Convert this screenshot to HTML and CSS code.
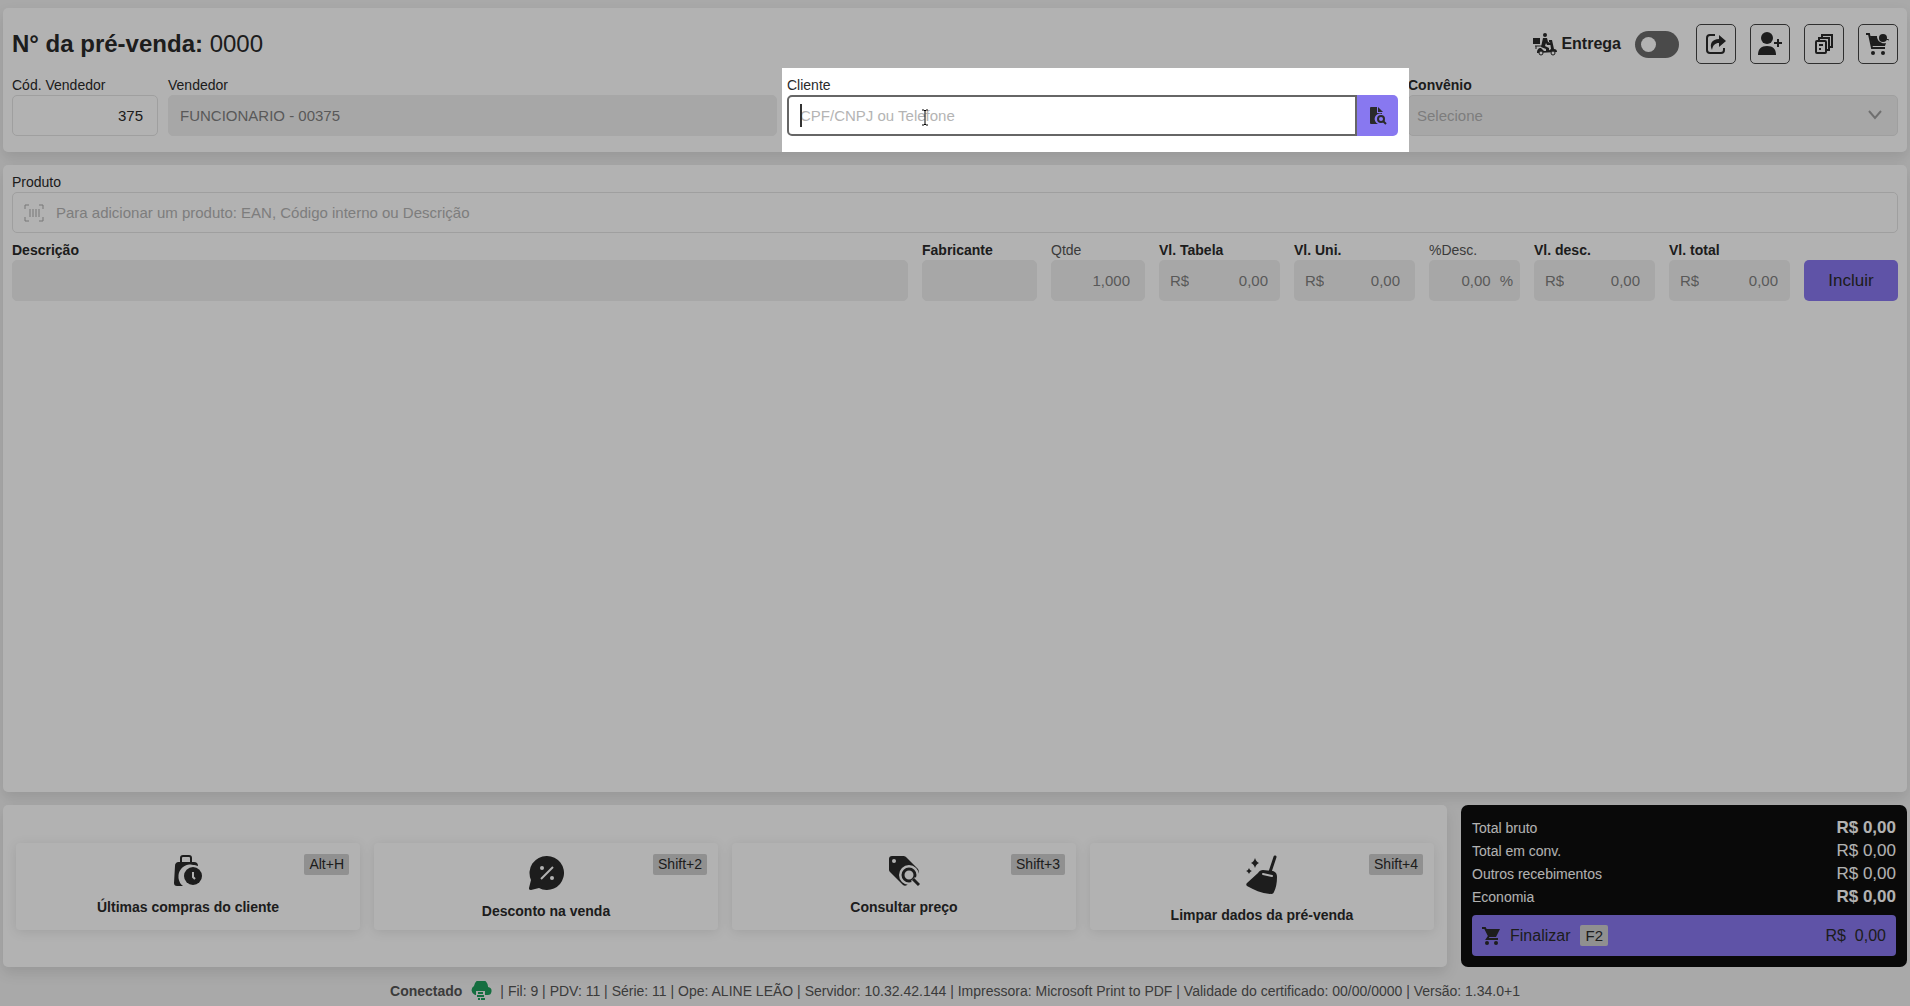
FILE: index.html
```
<!DOCTYPE html>
<html lang="pt-BR">
<head>
    <meta charset="UTF-8">
    <meta name="viewport" content="width=device-width, initial-scale=1.0">
    <title>Pré-venda</title>
    <link rel="stylesheet" href="styles.css">
</head>
<body>
    <main class="page">
        <section class="card header">
            <div class="header-top">
                <h1>N° da pré-venda: <span>0000</span></h1>
                <div class="actions">
                    <label class="delivery" for="entrega">
                        <svg width="24" height="24" viewBox="0 0 24 24">
                            <path d="M0 6h7v6H0z"/>
                            <circle cx="12" cy="3" r="2"/>
                            <path d="M10 6h4l1 4 3 1v2h-4l-1-2-1 3 4 2v3h-3v-2l-5-2z"/>
                            <path d="M2 14h7M3 14v3" stroke="currentColor" stroke-width="1"/>
                            <path d="M4 21c0-3 1-5 4-5l3 3h4l3-2-1-7h-1V8h3l2 9c2 0 3 1 3 3z"/>
                            <circle cx="8" cy="21" r="2" fill="#fff" stroke="currentColor" stroke-width="1"/>
                            <circle cx="20" cy="21" r="2" fill="#fff" stroke="currentColor" stroke-width="1"/>
                        </svg>
                        Entrega
                    </label>
                    <input type="checkbox" class="switch" id="entrega" role="switch">
                    <button type="button" class="icon-btn" aria-label="Exportar">
                        <svg width="22" height="22" viewBox="0 0 22 22">
                            <path d="M10 2H5a3 3 0 0 0-3 3v12a3 3 0 0 0 3 3h11a3 3 0 0 0 3-3v-2" fill="none" stroke="currentColor" stroke-width="2"/>
                            <path d="M14 2l7 6-7 6v-4c-4 0-6 2-7 7-3-6 0-11 7-11z"/>
                        </svg>
                    </button>
                    <button type="button" class="icon-btn" aria-label="Novo cliente">
                        <svg width="24" height="24" viewBox="0 0 24 24">
                            <circle cx="9" cy="6" r="6"/>
                            <path d="M0 23c0-6 3-9 9-9s9 3 9 9z"/>
                            <path d="M20 7v8M16 11h8" stroke="currentColor" stroke-width="2"/>
                        </svg>
                    </button>
                    <button type="button" class="icon-btn" aria-label="Copiar">
                        <svg class="outline" width="20" height="20" viewBox="0 0 20 20">
                            <rect x="2" y="7" width="10" height="12" rx="1"/>
                            <path d="M5 6V4h10v12h-2M8 3V1h10v12h-2M5 11h4M5 15h2"/>
                        </svg>
                    </button>
                    <button type="button" class="icon-btn" aria-label="Carrinho">
                        <svg width="24" height="24" viewBox="0 0 24 24">
                            <path d="M0 2h3l3 14h13" fill="none" stroke="currentColor" stroke-width="2"/>
                            <path d="M4 4h7a7 7 0 0 0 9 7l-1 3H6z"/>
                            <circle cx="17" cy="6" r="4"/>
                            <path d="M20 7l3 1" stroke="currentColor" stroke-width="1"/>
                            <circle cx="7" cy="21" r="2"/>
                            <circle cx="17" cy="21" r="2"/>
                        </svg>
                    </button>
                </div>
            </div>
            <div class="header-fields">
                <div class="field">
                    <label for="codVendedor">Cód. Vendedor</label>
                    <input type="text" class="number" id="codVendedor" value="375">
                </div>
                <div class="field">
                    <label for="vendedor">Vendedor</label>
                    <input type="text" id="vendedor" value="FUNCIONARIO - 00375" disabled>
                </div>
                <div class="field cliente">
                    <label for="cliente">Cliente</label>
                    <div class="input-group">
                        <input type="text" id="cliente" placeholder="CPF/CNPJ ou Telefone">
                        <button type="button" aria-label="Buscar cliente">
                            <svg width="18" height="18" viewBox="0 0 18 18">
                                <path d="M2 0h6v6h5v1a5 5 0 0 0-4 10H2a1 1 0 0 1-1-1V1a1 1 0 0 1 1-1z"/>
                                <path d="M9 0l5 5H9z"/>
                                <circle cx="12" cy="12" r="3" fill="none" stroke="currentColor" stroke-width="2"/>
                                <path d="M14 14l3 3" stroke="currentColor" stroke-width="2"/>
                            </svg>
                        </button>
                    </div>
                    <span class="caret"></span>
                    <svg class="cursor outline" width="8" height="17" viewBox="0 0 8 17">
                        <path d="M1 1h2l1 1 1-1h2M4 2v13M1 16h2l1-1 1 1h2"/>
                    </svg>
                </div>
                <div class="field">
                    <label class="strong" for="convenio">Convênio</label>
                    <div class="select">
                        <select id="convenio" disabled>
                            <option>Selecione</option>
                        </select>
                        <svg class="outline" width="16" height="12" viewBox="0 0 16 12">
                            <path d="M2 2l6 7 6-7"/>
                        </svg>
                    </div>
                </div>
            </div>
        </section>

        <section class="card products">
            <div class="field">
                <label for="produto">Produto</label>
                <div class="search">
                    <svg class="outline thin" width="20" height="18" viewBox="0 0 20 18">
                        <path d="M1 5V1h4M15 1h4v4M19 13v4h-4M5 17H1v-4M6 5v8M9 5v8M12 5v8M15 5v8"/>
                    </svg>
                    <input type="text" id="produto" placeholder="Para adicionar um produto: EAN, Código interno ou Descrição">
                </div>
            </div>
            <div class="item-row">
                <div class="field">
                    <label class="strong" for="descricao">Descrição</label>
                    <input type="text" id="descricao" disabled>
                </div>
                <div class="field">
                    <label class="strong" for="fabricante">Fabricante</label>
                    <input type="text" id="fabricante" disabled>
                </div>
                <div class="field">
                    <label class="soft" for="qtde">Qtde</label>
                    <input type="text" class="number" id="qtde" value="1,000" disabled>
                </div>
                <div class="field">
                    <label class="strong" for="vlTabela">Vl. Tabela</label>
                    <div class="money"><span>R$</span><input type="text" id="vlTabela" value="0,00" disabled></div>
                </div>
                <div class="field">
                    <label class="strong" for="vlUni">Vl. Uni.</label>
                    <div class="money wide"><span>R$</span><input type="text" id="vlUni" value="0,00" disabled></div>
                </div>
                <div class="field">
                    <label class="soft" for="percDesc">%Desc.</label>
                    <div class="money percent"><input type="text" id="percDesc" value="0,00" disabled><span>%</span></div>
                </div>
                <div class="field">
                    <label class="strong" for="vlDesc">Vl. desc.</label>
                    <div class="money wide"><span>R$</span><input type="text" id="vlDesc" value="0,00" disabled></div>
                </div>
                <div class="field">
                    <label class="strong" for="vlTotal">Vl. total</label>
                    <div class="money"><span>R$</span><input type="text" id="vlTotal" value="0,00" disabled></div>
                </div>
                <button type="button" class="include">Incluir</button>
            </div>
        </section>

        <div class="bottom">
            <section class="card shortcuts">
                <button type="button" class="shortcut">
                    <svg width="30" height="32" viewBox="0 0 30 32">
                        <path d="M8 7V3a2 2 0 0 1 2-2h6a2 2 0 0 1 2 2v4" fill="none" stroke="currentColor" stroke-width="2"/>
                        <path d="M5 7h16a4 4 0 0 1 4 4v1A12 12 0 0 0 10 31H4a3 3 0 0 1-3-3l1-17a4 4 0 0 1 3-4z"/>
                        <circle cx="20" cy="21" r="11" fill="#fff"/>
                        <circle cx="20" cy="21" r="9"/>
                        <path d="M20 17v5l2 2" fill="none" stroke="#fff" stroke-width="2"/>
                    </svg>
                    <span>Últimas compras do cliente</span>
                    <kbd>Alt+H</kbd>
                </button>
                <button type="button" class="shortcut">
                    <svg width="36" height="36" viewBox="0 0 36 36">
                        <path d="M19 1a17 17 0 1 1-8 32l-8 2c-2 0-2-1-2-2l2-8A17 17 0 0 1 19 1z"/>
                        <path d="M13 24L25 12" stroke="#fff" stroke-width="2"/>
                        <circle cx="14" cy="13" r="2" fill="#fff"/>
                        <circle cx="24" cy="23" r="2" fill="#fff"/>
                    </svg>
                    <span>Desconto na venda</span>
                    <kbd>Shift+2</kbd>
                </button>
                <button type="button" class="shortcut">
                    <svg width="32" height="32" viewBox="0 0 32 32">
                        <path d="M4 1h11c1 0 2 0 3 1l12 12c1 2 1 3 0 5L19 30c-1 1-3 1-4 0L2 17c-1-1-1-2-1-3V4a3 3 0 0 1 3-3z"/>
                        <circle cx="6" cy="6" r="2" fill="#fff"/>
                        <circle cx="21" cy="20" r="10" fill="#fff"/>
                        <circle cx="21" cy="20" r="6" fill="none" stroke="currentColor" stroke-width="3"/>
                        <path d="M25 24l6 6" stroke="#fff" stroke-width="6"/>
                        <path d="M25 24l6 6" stroke="currentColor" stroke-width="3"/>
                    </svg>
                    <span>Consultar preço</span>
                    <kbd>Shift+3</kbd>
                </button>
                <button type="button" class="shortcut">
                    <svg width="32" height="40" viewBox="0 0 32 40">
                        <path d="M29 2l-5 15" stroke="currentColor" stroke-width="3" stroke-linecap="round"/>
                        <path d="M17 15l10 1c3 1 4 3 4 6 0 6-1 11-3 15-1 2-2 2-4 2-9-1-16-4-23-8-1-1-1-2 0-3l11-10c1-2 3-3 5-3z"/>
                        <path d="M17 19l9 2" stroke="#fff" stroke-width="2" stroke-linecap="round"/>
                        <path d="M9 3c1 3 2 4 4 5-2 1-3 2-4 5-1-3-2-4-4-5 2-1 3-2 4-5zM3 13c1 2 1 2 3 3-2 1-2 1-3 3-1-2-1-2-3-3 2-1 2-1 3-3z"/>
                    </svg>
                    <span>Limpar dados da pré-venda</span>
                    <kbd>Shift+4</kbd>
                </button>
            </section>
            <section class="totals">
                <dl>
                    <div class="strong"><dt>Total bruto</dt><dd>R$ 0,00</dd></div>
                    <div><dt>Total em conv.</dt><dd>R$ 0,00</dd></div>
                    <div><dt>Outros recebimentos</dt><dd>R$ 0,00</dd></div>
                    <div class="strong"><dt>Economia</dt><dd>R$ 0,00</dd></div>
                </dl>
                <button type="button" class="finish">
                    <svg width="18" height="18" viewBox="0 0 18 18">
                        <path d="M0 1h3l4 8-2 3h11" fill="none" stroke="currentColor" stroke-width="2"/>
                        <path d="M3 2h15l-4 8H7z"/>
                        <circle cx="5" cy="16" r="2"/>
                        <circle cx="14" cy="16" r="2"/>
                    </svg>
                    Finalizar
                    <kbd>F2</kbd>
                    <span class="amount">R$&nbsp; 0,00</span>
                </button>
            </section>
        </div>

        <footer class="status">
            <strong>Conectado</strong>
            <svg width="22" height="20" viewBox="0 0 22 20">
                <path d="M5 14a5 5 0 0 1-1-9 7 7 0 0 1 14 1 4 4 0 0 1-1 8h-2v-4H6v4z"/>
                <path d="M8 12h5M7 15h7M8 18h2M11 18h4" stroke="currentColor" stroke-width="2"/>
            </svg>
            <span>| Fil: 9 | PDV: 11 | Série: 11 | Ope: ALINE LEÃO | Servidor: 10.32.42.144 | Impressora: Microsoft Print to PDF | Validade do certificado: 00/00/0000 | Versão: 1.34.0+1</span>
        </footer>
    </main>
</body>
</html>
```
FILE: styles.css
```
* {
    box-sizing: border-box;
}
body {
    margin: 0;
    font-family: "Liberation Sans", Arial, sans-serif;
    font-size: 15px;
    color: #2a2a2a;
    background-color: #f2f2f2;
}
input,
select,
button,
kbd {
    font-family: inherit;
    font-size: 15px;
    color: inherit;
}
svg {
    fill: currentColor;
    flex-shrink: 0;
}
svg.outline {
    fill: none;
    stroke: currentColor;
    stroke-width: 2;
}
svg.thin {
    stroke-width: 1;
}
.page {
    display: flex;
    flex-direction: column;
    gap: 13px;
    min-height: 100vh;
    padding: 8px 3px 4px;
}
.card {
    background-color: #fff;
    border-radius: 5px;
    box-shadow: 0 6px 14px rgba(0, 0, 0, 0.1);
}
.header {
    padding: 16px 9px;
}
.header-top {
    display: flex;
    justify-content: space-between;
    align-items: center;
    height: 40px;
}
h1 {
    margin: 0;
    font-size: 24px;
}
h1 span {
    font-weight: normal;
}
.actions {
    display: flex;
    align-items: center;
    gap: 14px;
}
.delivery {
    display: flex;
    align-items: center;
    gap: 4px;
    font-size: 16px;
    font-weight: bold;
}
.switch {
    appearance: none;
    width: 44px;
    height: 27px;
    margin: 0 3px 0 0;
    padding: 6px;
    border-radius: 14px;
    background-color: #6a6a6a;
}
.switch::before {
    content: "";
    display: block;
    width: 15px;
    height: 15px;
    border-radius: 50%;
    background-color: #fff;
}
.switch:checked::before {
    margin-left: auto;
}
.icon-btn {
    display: flex;
    align-items: center;
    justify-content: center;
    width: 40px;
    height: 40px;
    padding: 0;
    border: 1px solid #444;
    border-radius: 5px;
    background: none;
}
.header-fields {
    display: grid;
    grid-template-columns: 146px 609fr 611fr 490fr;
    gap: 10px;
    padding-top: 12px;
}
.field {
    min-width: 0;
}
.field label {
    display: block;
    height: 19px;
    font-size: 14px;
    line-height: 18px;
    white-space: nowrap;
}
.field label.strong,
.totals .strong dd {
    font-weight: bold;
}
.field label.soft {
    color: #555;
}
.field input,
.field select {
    width: 100%;
    height: 41px;
    padding: 0 11px;
    border: 1px solid #e4e4e4;
    border-radius: 5px;
    background-color: #fff;
}
.field input:disabled,
.field select:disabled {
    border-color: #f0f0f0;
    background-color: #f0f0f0;
    color: #808080;
    opacity: 1;
}
.field input.number {
    padding-right: 14px;
    text-align: right;
}
::placeholder {
    color: #b4b4b4;
    opacity: 1;
}
/* tour step: everything around the field is dimmed */
.cliente {
    position: relative;
    z-index: 10;
}
.cliente::before {
    content: "";
    position: absolute;
    inset: -8px -11px -16px -5px;
    z-index: -1;
    background-color: #fff;
    box-shadow: 0 0 0 9999px rgba(0, 0, 0, 0.3);
}
.input-group {
    display: flex;
}
.input-group input {
    flex: 1;
    border: 2px solid #666;
    border-radius: 5px 0 0 5px;
}
.input-group button {
    display: flex;
    align-items: center;
    justify-content: center;
    width: 41px;
    height: 41px;
    padding: 0;
    border: none;
    border-radius: 0 5px 5px 0;
    background-color: #8878f0;
}
.caret {
    position: absolute;
    left: 13px;
    top: 28px;
    width: 2px;
    height: 23px;
    background-color: #333;
}
.cursor {
    position: absolute;
    left: 134px;
    top: 33px;
    color: #000;
}
.cursor.outline {
    stroke-width: 1;
}
.select {
    position: relative;
    color: #a0a0a0;
}
.field .select select:disabled {
    appearance: none;
    padding: 0 8px;
    border-color: #e4e4e4;
    color: #b4b4b4;
}
.select svg {
    position: absolute;
    right: 15px;
    top: 14px;
}
.products {
    flex: 1;
    padding: 8px 9px;
}
.search {
    display: flex;
    align-items: center;
    gap: 12px;
    padding-left: 11px;
    border: 1px solid #e4e4e4;
    border-radius: 5px;
    color: #aaa;
}
.search input {
    height: 39px;
    padding: 0;
    border: none;
}
.item-row {
    display: grid;
    grid-template-columns: 1fr 115px 94px 121px 121px 91px 121px 121px 94px;
    align-items: end;
    gap: 14px;
    padding-top: 8px;
}
.money {
    display: flex;
    align-items: center;
    padding: 0 11px;
    border-radius: 5px;
    background-color: #f0f0f0;
    color: #808080;
}
.money.wide {
    padding-right: 14px;
}
.money.percent {
    padding: 0 7px;
    gap: 8px;
}
.money input {
    flex: 1;
    min-width: 0;
    padding: 0;
    text-align: right;
}
.include {
    height: 41px;
    border: none;
    border-radius: 5px;
    background-color: #8878f0;
    font-size: 17px;
}
.bottom {
    display: grid;
    grid-template-columns: 1444fr 446fr;
    gap: 14px;
}
.shortcuts {
    display: grid;
    grid-template-columns: repeat(4, 1fr);
    align-items: center;
    gap: 14px;
    padding: 0 13px;
}
.shortcut {
    position: relative;
    display: flex;
    flex-direction: column;
    align-items: center;
    gap: 12px;
    height: 87px;
    padding: 12px 0 0;
    border: none;
    border-radius: 4px;
    background-color: #fff;
    box-shadow: 0 2px 12px rgba(0, 0, 0, 0.1);
    font-size: 14px;
    font-weight: bold;
}
kbd {
    padding: 2px 5px;
    border-radius: 2px;
    background-color: #cfcfcf;
    line-height: 17px;
}
.shortcut kbd {
    position: absolute;
    right: 11px;
    top: 11px;
    font-size: 14px;
    font-weight: normal;
}
.totals {
    padding: 11px;
    border-radius: 7px;
    background-color: #0e0e0e;
    color: #fff;
}
dl {
    margin: 0;
}
dl div {
    display: flex;
    justify-content: space-between;
    align-items: center;
    height: 23px;
}
dt {
    font-size: 14px;
}
dd {
    margin: 0;
    font-size: 17px;
}
.finish {
    display: flex;
    align-items: center;
    gap: 10px;
    width: 100%;
    height: 41px;
    margin-top: 7px;
    padding: 0 10px;
    border: none;
    border-radius: 4px;
    background-color: #8878f0;
    color: #2a2a2a;
    font-size: 16px;
}
.finish .amount {
    margin-left: auto;
}
.status {
    display: flex;
    justify-content: center;
    align-items: center;
    gap: 8px;
    height: 22px;
    color: #555;
    font-size: 14px;
}
.status svg {
    color: #1f9e5c;
}
```
